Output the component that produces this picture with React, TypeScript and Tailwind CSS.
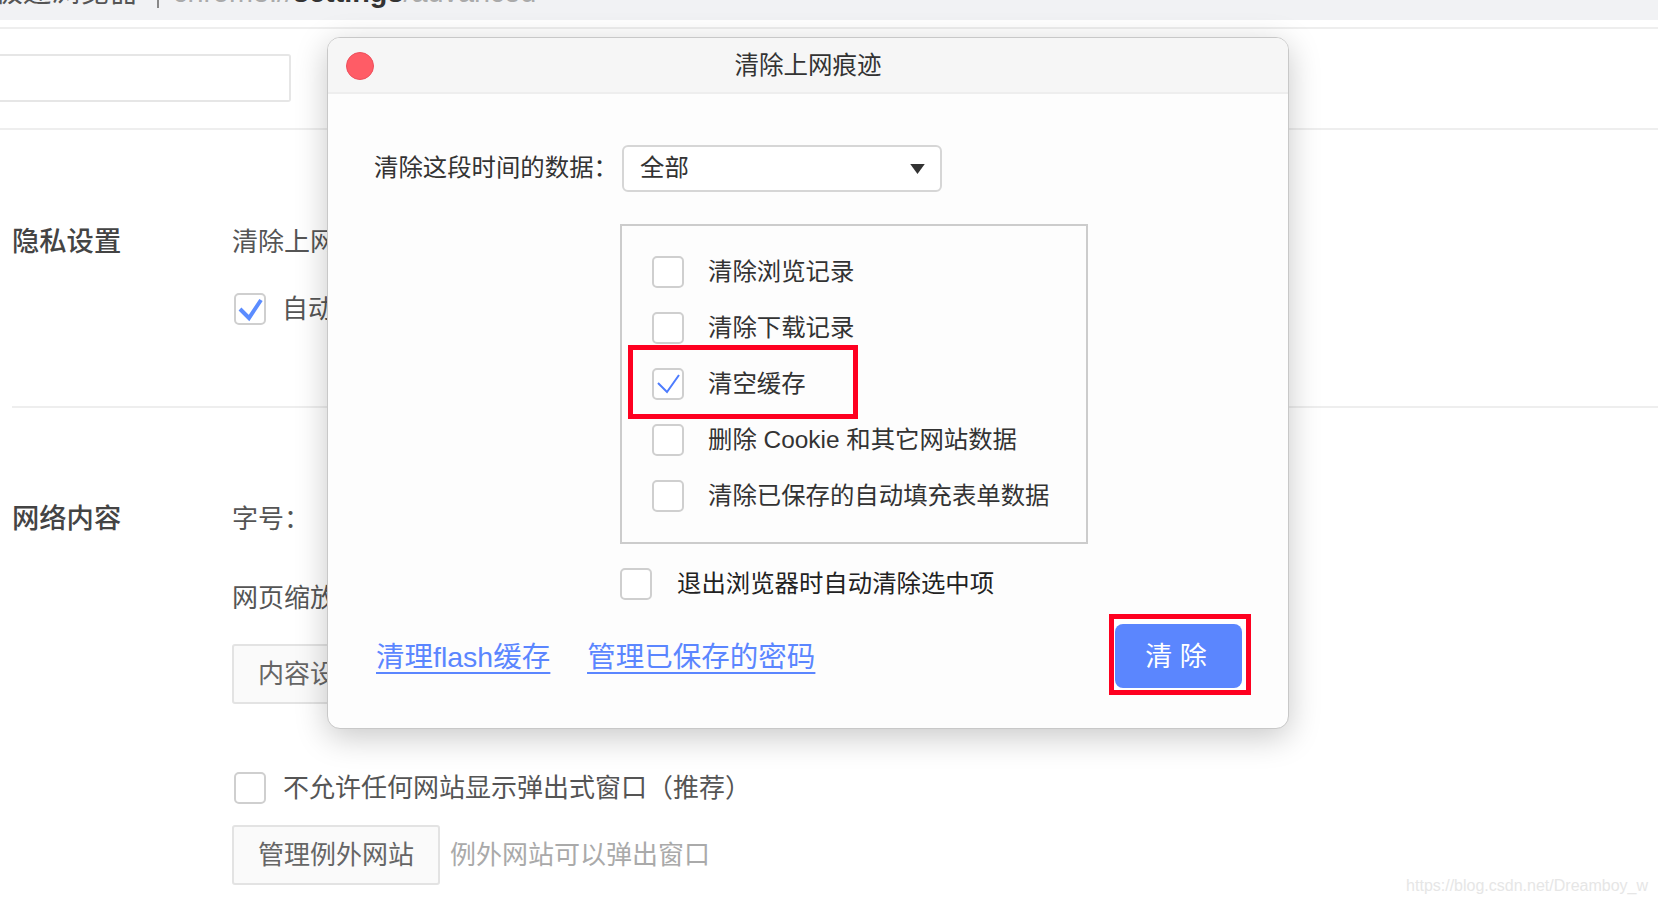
const font = 'font-["Liberation_Sans","Noto_Sans_CJK_SC",sans-serif]';

const clearItems = [
  { label: '清除浏览记录', checked: false },
  { label: '清除下载记录', checked: false },
  { label: '清空缓存', checked: true },
  { label: '删除 Cookie 和其它网站数据', checked: false },
  { label: '清除已保存的自动填充表单数据', checked: false },
];

function Checkbox({ checked, bold }: { checked?: boolean; bold?: boolean }) {
  return (
    <span className="block w-[32px] h-[32px] shrink-0 rounded-[5px] border-2 border-[#cfcfcf] bg-white">
      {checked && (
        <svg viewBox="0 0 28 28" className="w-[28px] h-[28px]" fill="none">
          {bold ? (
            <path d="M4 14 L13 23 L25 5" stroke="#5b8cff" strokeWidth="4" />
          ) : (
            <path d="M4 13 L13 22 L25 5" stroke="#4d7cfe" strokeWidth="2" />
          )}
        </svg>
      )}
    </span>
  );
}

function PageButton({ children }: { children: string }) {
  return (
    <div className="flex items-center w-[208px] h-[60px] pl-[24px] rounded-[3px] border-2 border-[#e3e3e3] bg-[#fafafa] text-[26px] text-[#666]">
      {children}
    </div>
  );
}

function ClearDialog() {
  return (
    <div className="absolute left-[327px] top-[37px] w-[962px] rounded-[13px] border border-[#c8c8c8] bg-[#fdfdfd] shadow-[0_8px_32px_rgba(0,0,0,0.22)] overflow-hidden">
      <div className="relative flex items-center justify-center h-[56px] pt-[3px] bg-[#f6f6f6] border-b-2 border-[#eeeeee] text-[24.5px] text-[#333]">
        <span className="absolute left-[18px] top-[14px] w-[28px] h-[28px] rounded-full bg-[#ff5c66] border border-[#ee4f5c]" />
        清除上网痕迹
      </div>

      <div className="pl-[46px] pr-[37px] pt-[51px] pb-[33px]">
        <div className="flex items-center">
          <span className="w-[248px] text-[24.4px] text-[#333] whitespace-nowrap">清除这段时间的数据：</span>
          <div className="flex items-center justify-between w-[320px] h-[47px] pl-[16px] pr-[15px] rounded-[6px] border-2 border-[#d6d6d6] bg-white text-[24.4px] text-[#333]">
            全部
            <svg viewBox="0 0 16 11" className="w-[15px] h-[10px]">
              <polygon points="0,0 16,0 8,11" fill="#333" />
            </svg>
          </div>
        </div>

        <div className="mt-[32px] ml-[246px] w-[468px] h-[320px] flex flex-col gap-[24px] pl-[30px] pt-[30px] border-2 border-[#cccccc]">
          {clearItems.map((item) => (
            <label key={item.label} className="relative flex items-center gap-[24px] h-[32px] text-[24.4px] text-[#333] whitespace-nowrap">
              <Checkbox checked={item.checked} />
              {item.label}
              {item.checked && (
                <span className="absolute left-[-24px] top-[-23px] w-[230px] h-[74px] border-[5px] border-[#fe0020]" />
              )}
            </label>
          ))}
        </div>

        <label className="mt-[24px] ml-[246px] flex items-center gap-[25px] h-[32px] text-[24.4px] text-[#222] whitespace-nowrap">
          <Checkbox />
          退出浏览器时自动清除选中项
        </label>

        <div className="mt-[14px] flex items-center justify-between">
          <div className="flex items-center gap-[37px] pl-[2px] pt-[5px] text-[28.5px] text-[#5b86ff] underline underline-offset-[5px] decoration-2">
            <a>清理flash缓存</a>
            <a>管理已保存的密码</a>
          </div>
          <div className="border-[5px] border-[#fe0020] bg-white pl-[1px] pt-[5px] pr-[4px] pb-[2px]">
            <button className="block w-[127px] h-[64px] pt-[3px] pr-[5px] rounded-[8px] bg-[#5b86fe] text-[27px] text-white">清 除</button>
          </div>
        </div>
      </div>
    </div>
  );
}

export default function App() {
  return (
    <div className={`relative h-[904px] overflow-hidden bg-white ${font}`}>
      <div className="h-5 overflow-hidden bg-[#f1f2f4]">
        <div className="flex items-center h-[40px] mt-[-27px] text-[28.8px] whitespace-nowrap">
          <span className="ml-[-6px] w-[163px] text-[#555]">极速浏览器</span>
          <span className="w-[2px] h-[30px] bg-[#888]" />
          <span className="ml-[14px] text-[#aaa]">chrome://</span>
          <span className="font-bold text-[#333]">settings</span>
          <span className="text-[#aaa]">/advanced</span>
        </div>
      </div>

      <div className="mt-[7px] h-[103px] border-y-2 border-[#eeeeee] pt-[25px]">
        <div className="w-[291px] h-[48px] rounded-r-[3px] border-2 border-l-0 border-[#e6e6e6]" />
      </div>

      <section className="ml-3 h-[278px] flex items-start pt-[92px] border-b-2 border-[#eeeeee]">
        <h2 className="w-[220px] text-[27.3px] leading-[40px] font-medium text-[#444]">隐私设置</h2>
        <div className="text-[26px] leading-[40px] text-[#555]">
          <div>清除上网痕迹</div>
          <div className="mt-[27px] ml-[2px] flex items-center gap-[16px]">
            <Checkbox checked bold />
            自动清除
          </div>
        </div>
      </section>

      <section className="ml-3 flex items-start pt-[91px]">
        <h2 className="w-[220px] text-[27.3px] leading-[40px] font-medium text-[#444]">网络内容</h2>
        <div className="text-[26px] leading-[40px] text-[#555]">
          <div>字号：</div>
          <div className="mt-[39px]">网页缩放</div>
          <div className="mt-[26px]">
            <PageButton>内容设置</PageButton>
          </div>
          <div className="mt-[64px] ml-[2px] flex items-center gap-[17px] whitespace-nowrap">
            <Checkbox />
            不允许任何网站显示弹出式窗口（推荐）
          </div>
          <div className="mt-[17px] flex items-center gap-[10px]">
            <PageButton>管理例外网站</PageButton>
            <span className="text-[26px] text-[#aaa]">例外网站可以弹出窗口</span>
          </div>
        </div>
      </section>

      <ClearDialog />

      <span className="absolute right-[10px] bottom-[6px] text-[16px] text-[#e6e6e6]">https://blog.csdn.net/Dreamboy_w</span>
    </div>
  );
}
